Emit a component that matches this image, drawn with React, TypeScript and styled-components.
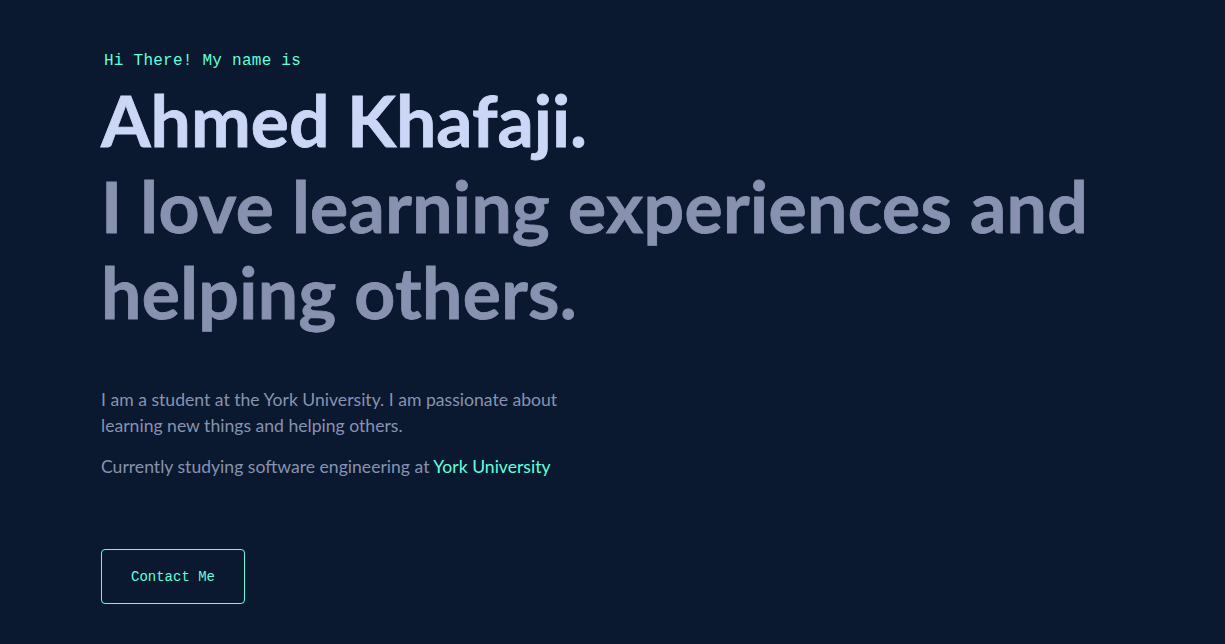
import React from "react";
import styled, { createGlobalStyle } from "styled-components";

const GlobalStyle = createGlobalStyle`
  html, body { margin: 0; padding: 0; background: #0a192f; }
  body { font-family: "Lato", "Liberation Sans", sans-serif; -webkit-font-smoothing: antialiased; }
  * { box-sizing: border-box; }
`;

const Page = styled.main`
  min-height: 644px;
  background: #0a192f;
  padding: 50px 100px 0 101px;
  overflow: hidden;
`;

const Hero = styled.section`
  display: flex;
  flex-direction: column;
  align-items: flex-start;
`;

const Greeting = styled.h1`
  margin: 0 0 4px 3px;
  font-family: "Liberation Mono", "DejaVu Sans Mono", monospace;
  font-weight: 400;
  font-size: 16px;
  letter-spacing: 0.25px;
  line-height: 22px;
  color: #64ffda;
`;

const BigHeading = styled.h2<{ $muted?: boolean }>`
  margin: 0;
  font-family: "Lato", "Liberation Sans", sans-serif;
  font-weight: 700;
  font-size: 71.5px;
  line-height: 86px;
  letter-spacing: ${(p) => (p.$muted ? "0.35px" : "0")};
  color: ${(p) => (p.$muted ? "#8892b0" : "#ccd6f6")};
  -webkit-text-stroke: 0.8px ${(p) => (p.$muted ? "#8892b0" : "#ccd6f6")};
  white-space: pre-line;
`;

const Text = styled.p`
  margin: 0 0 15px;
  max-width: 480px;
  font-size: 17.6px;
  line-height: 26px;
  color: #8892b0;
`;

const TextBlock = styled.div`
  margin-top: 53px;
`;

const Link = styled.a`
  color: #64ffda;
  text-decoration: none;
`;

const Button = styled.a`
  display: inline-flex;
  align-items: center;
  justify-content: center;
  margin-top: 54px;
  width: 144px;
  height: 55px;
  border: 1px solid #64ffda;
  border-radius: 4px;
  font-family: "Liberation Mono", "DejaVu Sans Mono", monospace;
  font-size: 14px;
  color: #64ffda;
  text-decoration: none;
`;

export default function App() {
  return (
    <>
      <GlobalStyle />
      <Page>
        <Hero>
          <Greeting>Hi There! My name is</Greeting>
          <BigHeading>Ahmed Khafaji.</BigHeading>
          <BigHeading $muted>{"I love learning experiences and\nhelping others."}</BigHeading>
          <TextBlock>
            <Text>
              I am a student at the York University. I am passionate about learning new things and helping others.
            </Text>
            <Text>
              Currently studying software engineering at <Link href="#">York University</Link>
            </Text>
          </TextBlock>
          <Button href="#">Contact Me</Button>
        </Hero>
      </Page>
    </>
  );
}
